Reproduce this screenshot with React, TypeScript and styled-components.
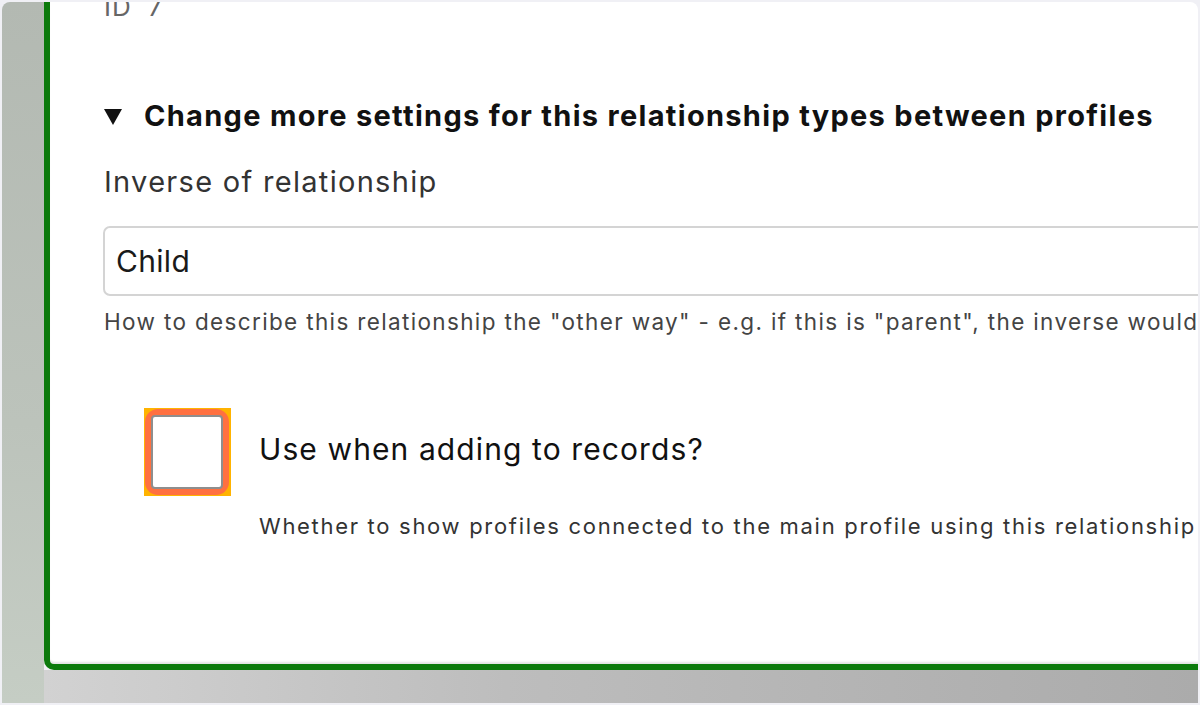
import React from "react";
import styled, { createGlobalStyle } from "styled-components";

const Global = createGlobalStyle`
  html, body { margin: 0; padding: 0; background: #f0f0f5; }
  body { font-family: Inter, "Noto Sans", sans-serif; }
`;

const Frame = styled.div`
  box-sizing: border-box;
  margin: 2px;
  width: 1196px;
  height: 701px;
  border-radius: 8px 8px 0 0;
  overflow: hidden;
  display: flex;
`;

const LeftStrip = styled.div`
  width: 42px;
  flex: none;
  background: linear-gradient(180deg, #b3b9b2 0%, #bcc3bb 60%, #c5cdc4 100%);
`;

const Main = styled.div`
  flex: 1;
  min-width: 0;
  display: flex;
  flex-direction: column;
`;

const Card = styled.div`
  box-sizing: border-box;
  height: 668px;
  flex: none;
  width: calc(100% + 40px);
  background: #fff;
  border-left: 6px solid #0c7a0c;
  border-bottom: 6px solid #0c7a0c;
  border-bottom-left-radius: 10px;
  box-shadow: inset 0 -3px 2px -1px #e4e4e4;
  padding-left: 54px;
  overflow: hidden;
  display: flex;
  flex-direction: column;
`;

const Bottom = styled.div`
  flex: 1;
  background: linear-gradient(90deg, #d2d2d2 0%, #bdbdbd 40%, #ababab 100%);
`;

const IdLine = styled.div`
  margin-top: -8px;
  font-size: 26px;
  line-height: 26px;
  letter-spacing: 1px;
  color: #666;
  display: flex;
  gap: 16px;
`;

const Summary = styled.div`
  margin-top: 79px;
  display: flex;
  align-items: center;
  gap: 22px;
  font-size: 29px;
  line-height: 34px;
  letter-spacing: 1.3px;
  font-weight: 700;
  color: #111;
  white-space: nowrap;
`;

const Triangle = styled.span`
  width: 0;
  height: 0;
  border-left: 9px solid transparent;
  border-right: 9px solid transparent;
  border-top: 16px solid #111;
  margin-top: 2px;
`;

const Label = styled.div`
  margin-top: 32px;
  font-size: 29px;
  line-height: 34px;
  letter-spacing: 1.3px;
  color: #333;
`;

const Input = styled.div`
  box-sizing: border-box;
  margin-top: 27px;
  margin-left: -1px;
  width: 1200px;
  height: 70px;
  border: 2px solid #d4d4d4;
  border-radius: 7px;
  padding-left: 11px;
  display: flex;
  align-items: center;
  font-size: 30px;
  letter-spacing: 0.3px;
  color: #1a1a1a;
`;

const Help = styled.div`
  margin-top: 12px;
  font-size: 22.5px;
  line-height: 28px;
  letter-spacing: 1.35px;
  color: #444;
  white-space: nowrap;
`;

const CheckRow = styled.div`
  margin-top: 72px;
  margin-left: 40px;
  display: grid;
  grid-template-columns: 87px auto;
  column-gap: 28px;
  align-items: start;
`;

const CheckFocus = styled.div`
  width: 87px;
  height: 88px;
  background: #ffb300;
  display: flex;
`;

const CheckRing = styled.div`
  box-sizing: border-box;
  flex: 1;
  margin: 1px 2px 1px 1px;
  background: #ff7040;
  border-radius: 13px;
  padding: 6px;
  display: flex;
`;

const CheckBox = styled.div`
  flex: 1;
  background: #fff;
  border: 2px solid #8e8e8e;
  border-radius: 4px;
`;

const CheckText = styled.div`
  display: flex;
  flex-direction: column;
  white-space: nowrap;
`;

const CheckLabel = styled.div`
  margin-top: 24px;
  font-size: 30px;
  line-height: 34px;
  letter-spacing: 1.1px;
  color: #111;
`;

const CheckHelp = styled.div`
  margin-top: 47px;
  font-size: 22px;
  line-height: 27px;
  letter-spacing: 1.7px;
  color: #333;
`;

export default function App() {
  return (
    <>
      <Global />
      <Frame>
        <LeftStrip />
        <Main>
          <Card>
            <IdLine>
              <span>ID</span>
              <span>7</span>
            </IdLine>
            <Summary>
              <Triangle />
              <span>Change more settings for this relationship types between profiles</span>
            </Summary>
            <Label>Inverse of relationship</Label>
            <Input>Child</Input>
            <Help>
              How to describe this relationship the "other way" - e.g. if this is "parent", the inverse would be "child"
            </Help>
            <CheckRow>
              <CheckFocus>
                <CheckRing>
                  <CheckBox />
                </CheckRing>
              </CheckFocus>
              <CheckText>
                <CheckLabel>Use when adding to records?</CheckLabel>
                <CheckHelp>
                  Whether to show profiles connected to the main profile using this relationship type
                </CheckHelp>
              </CheckText>
            </CheckRow>
          </Card>
          <Bottom />
        </Main>
      </Frame>
    </>
  );
}
